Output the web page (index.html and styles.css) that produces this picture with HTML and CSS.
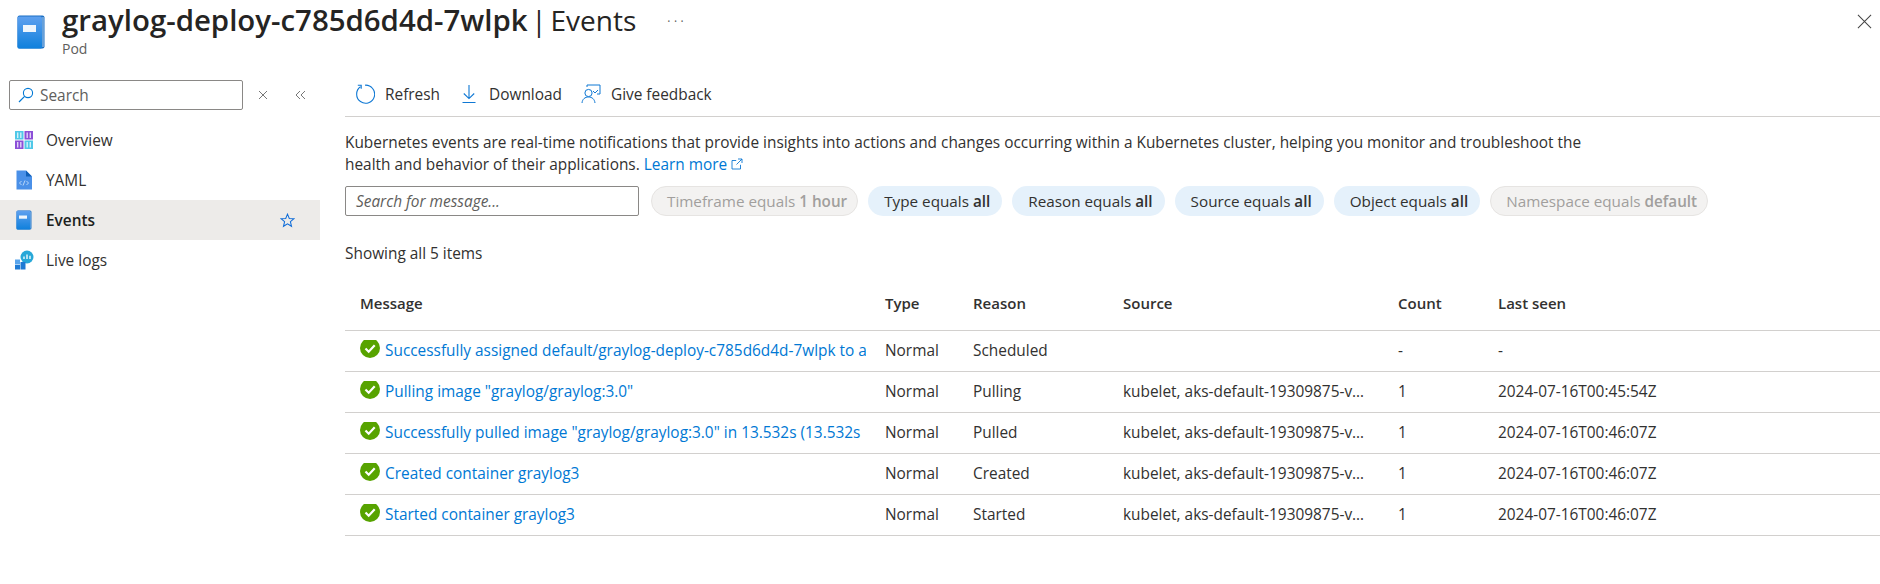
FILE: index.html
```html
<!DOCTYPE html>
<html lang="en">
<head>
    <meta charset="UTF-8">
    <title>graylog-deploy-c785d6d4d-7wlpk | Events</title>
    <link rel="stylesheet" href="styles.css">
</head>
<body>
    <svg class="hidden">
        <defs>
            <linearGradient id="bookBlue" x1="0" y1="0" x2="0" y2="1">
                <stop offset="0" stop-color="#5ea0ef"/>
                <stop offset="1" stop-color="#0f80dc"/>
            </linearGradient>
        </defs>
    </svg>

    <header class="header">
        <svg class="header-icon" viewBox="0 0 28 34">
            <rect x="0.500" y="0.500" width="27" height="33" rx="2" fill="#1a6fc4"/>
            <path d="M26 2v30" stroke="#dcebfa" stroke-width="0.800"/>
            <rect x="0.500" y="1.500" width="24.500" height="32" rx="1.500" fill="url(#bookBlue)"/>
            <rect x="6" y="10" width="13" height="7" fill="#eef5fc"/>
        </svg>
        <div class="header-text">
            <h1><b>graylog-deploy-c785d6d4d-7wlpk</b> | Events</h1>
            <div class="subtitle">Pod</div>
        </div>
        <div class="header-more">&middot;&middot;&middot;</div>
        <svg class="header-close" viewBox="0 0 16 16"><path d="M1 1l14 14M15 1L1 15" stroke="#444" stroke-width="1.100" fill="none"/></svg>
    </header>

    <div class="layout">
        <nav class="sidebar">
            <div class="side-search-row">
                <div class="side-search">
                    <svg class="icon-14" viewBox="0 0 16 16"><circle cx="10" cy="6" r="4.600" fill="none" stroke="#0078d4" stroke-width="1.100"/><path d="M6.600 9.400L1 15" stroke="#0078d4" stroke-width="1.200"/></svg>
                    <span>Search</span>
                </div>
                <svg class="side-btn" viewBox="0 0 12 12"><path d="M2 2l8 8M10 2l-8 8" stroke="#777" stroke-width="1" fill="none"/></svg>
                <svg class="side-btn" viewBox="0 0 12 12"><path d="M6 2L2 6l4 4M11 2L7 6l4 4" stroke="#777" stroke-width="1" fill="none"/></svg>
            </div>
            <div class="nav-item">
                <svg class="nav-icon" viewBox="0 0 20 20">
                    <rect x="1" y="1" width="8.500" height="8.500" fill="#50c8e8"/>
                    <rect x="10.500" y="1" width="8.500" height="8.500" fill="#8c4fd8"/>
                    <rect x="1" y="10.500" width="8.500" height="8.500" fill="#8c4fd8"/>
                    <rect x="10.500" y="10.500" width="8.500" height="8.500" fill="#50c8e8"/>
                    <path d="M3.700 2.500v5.500M6.800 2.500v5.500M13.200 2.500v5.500M16.300 2.500v5.500M3.700 12v5.500M6.800 12v5.500M13.200 12v5.500M16.300 12v5.500" stroke="#fff" stroke-opacity="0.750" stroke-width="1.400"/>
                </svg>
                <span>Overview</span>
            </div>
            <div class="nav-item">
                <svg class="nav-icon" viewBox="0 0 20 20">
                    <path d="M2.500 0.500H12L18 6.500V19.500H2.500z" fill="#4a90e8"/>
                    <path d="M12 0.500L18 6.500H12z" fill="#0f5fb8"/>
                    <path d="M7.500 11l-2 2 2 2M12.500 11l2 2-2 2M11 10.500l-2 5" stroke="#d6e8fb" stroke-width="0.800" fill="none"/>
                </svg>
                <span>YAML</span>
            </div>
            <div class="nav-item active">
                <svg class="nav-icon" viewBox="0 0 16 20">
                    <rect x="0.500" y="0.500" width="15" height="19" rx="1.500" fill="#1a6fc4"/>
                    <path d="M14.700 1.500v17" stroke="#dcebfa" stroke-width="0.500"/>
                    <rect x="0.500" y="0.800" width="13.800" height="18.700" rx="1" fill="url(#bookBlue)"/>
                    <rect x="3" y="5.500" width="8" height="3.200" fill="#eef5fc"/>
                </svg>
                <span>Events</span>
                <svg class="nav-star" viewBox="0 0 16 16"><path d="M8 1.200l1.900 4.600 5 .3-3.800 3.200 1.200 4.900L8 11.600l-4.300 2.600 1.200-4.900L1.100 6.100l5-.3z" fill="none" stroke="#0f6cd8" stroke-width="1.100"/></svg>
            </div>
            <div class="nav-item">
                <svg class="nav-icon" viewBox="0 0 20 20">
                    <circle cx="13" cy="7" r="6.500" fill="#28a8d8"/>
                    <path d="M10 9V6.500M13 9V4.500M16 9V5.800" stroke="#fff" stroke-width="1.300"/>
                    <rect x="1" y="9.500" width="5" height="5" fill="#5aa5ec"/>
                    <rect x="1" y="15" width="5" height="4.500" fill="#1f7ad4"/>
                    <rect x="6.500" y="12" width="5" height="7.500" fill="#1f7ad4"/>
                </svg>
                <span>Live logs</span>
            </div>
        </nav>

        <main class="content">
            <div class="toolbar">
                <div class="tool">
                    <svg class="tool-icon" viewBox="0 0 20 20"><path d="M5.500 2.800A9 9 0 1 0 10 1.200" fill="none" stroke="#0f78d4" stroke-width="1.100"/><path d="M2.800 1.200h3.400v3.600" fill="none" stroke="#0f78d4" stroke-width="1.100"/></svg>
                    <span>Refresh</span>
                </div>
                <div class="tool">
                    <svg class="tool-icon" viewBox="0 0 20 20"><path d="M10 1v13M4.800 9.500L10 14.600l5.200-5.100M3.500 18.500h13" fill="none" stroke="#0f78d4" stroke-width="1.100"/></svg>
                    <span>Download</span>
                </div>
                <div class="tool">
                    <svg class="tool-icon" viewBox="0 0 20 20"><path d="M6 3V1h13v9h-3" fill="none" stroke="#0f78d4" stroke-width="1"/><path d="M12 7l2 2 3-3" fill="none" stroke="#0f78d4" stroke-width="1"/><circle cx="7.500" cy="9" r="3.600" fill="none" stroke="#0f78d4" stroke-width="1"/><path d="M1 19c.4-4 3-6 6.500-6s6 2 6.500 6" fill="none" stroke="#0f78d4" stroke-width="1"/></svg>
                    <span>Give feedback</span>
                </div>
            </div>

            <p class="intro">Kubernetes events are real-time notifications that provide insights into actions and changes occurring within a Kubernetes cluster, helping you monitor and troubleshoot the<br>health and behavior of their applications. <a class="link">Learn more</a>
                <svg class="ext-icon" viewBox="0 0 12 12"><path d="M9.500 6.800V11H1V2.500h4.200M7 1h4v4M11 1L5.500 6.500" fill="none" stroke="#0f78d4" stroke-width="0.900"/></svg>
            </p>

            <div class="filters">
                <div class="msg-search">Search for message...</div>
                <div class="chip off">Timeframe equals <b>1 hour</b></div>
                <div class="chip">Type equals <b>all</b></div>
                <div class="chip">Reason equals <b>all</b></div>
                <div class="chip">Source equals <b>all</b></div>
                <div class="chip">Object equals <b>all</b></div>
                <div class="chip off">Namespace equals <b>default</b></div>
            </div>

            <div class="count-line">Showing all 5 items</div>

            <table class="events">
                <colgroup>
                    <col class="c-msg"><col class="c-type"><col class="c-reason"><col class="c-source"><col class="c-count"><col>
                </colgroup>
                <thead>
                    <tr><th>Message</th><th>Type</th><th>Reason</th><th>Source</th><th>Count</th><th>Last seen</th></tr>
                </thead>
                <tbody>
                    <tr>
                        <td class="msg-cell"><div class="msg"><svg class="ok" viewBox="0 0 20 20"><circle cx="10" cy="10" r="10" fill="#57a300"/><path d="M5.500 10.500l3.200 3.200 6-6.500" fill="none" stroke="#fff" stroke-width="2.200"/></svg><a class="link">Successfully assigned default/graylog-deploy-c785d6d4d-7wlpk to aks-default-19309875-vmss000002</a></div></td>
                        <td>Normal</td><td>Scheduled</td><td></td><td>-</td><td>-</td>
                    </tr>
                    <tr>
                        <td class="msg-cell"><div class="msg"><svg class="ok" viewBox="0 0 20 20"><circle cx="10" cy="10" r="10" fill="#57a300"/><path d="M5.500 10.500l3.200 3.200 6-6.500" fill="none" stroke="#fff" stroke-width="2.200"/></svg><a class="link">Pulling image "graylog/graylog:3.0"</a></div></td>
                        <td>Normal</td><td>Pulling</td><td><div class="cut">kubelet, aks-default-19309875-vmss000002</div></td><td>1</td><td>2024-07-16T00:45:54Z</td>
                    </tr>
                    <tr>
                        <td class="msg-cell"><div class="msg"><svg class="ok" viewBox="0 0 20 20"><circle cx="10" cy="10" r="10" fill="#57a300"/><path d="M5.500 10.500l3.200 3.200 6-6.500" fill="none" stroke="#fff" stroke-width="2.200"/></svg><a class="link">Successfully pulled image "graylog/graylog:3.0" in 13.532s (13.532s</a></div></td>
                        <td>Normal</td><td>Pulled</td><td><div class="cut">kubelet, aks-default-19309875-vmss000002</div></td><td>1</td><td>2024-07-16T00:46:07Z</td>
                    </tr>
                    <tr>
                        <td class="msg-cell"><div class="msg"><svg class="ok" viewBox="0 0 20 20"><circle cx="10" cy="10" r="10" fill="#57a300"/><path d="M5.500 10.500l3.200 3.200 6-6.500" fill="none" stroke="#fff" stroke-width="2.200"/></svg><a class="link">Created container graylog3</a></div></td>
                        <td>Normal</td><td>Created</td><td><div class="cut">kubelet, aks-default-19309875-vmss000002</div></td><td>1</td><td>2024-07-16T00:46:07Z</td>
                    </tr>
                    <tr>
                        <td class="msg-cell"><div class="msg"><svg class="ok" viewBox="0 0 20 20"><circle cx="10" cy="10" r="10" fill="#57a300"/><path d="M5.500 10.500l3.200 3.200 6-6.500" fill="none" stroke="#fff" stroke-width="2.200"/></svg><a class="link">Started container graylog3</a></div></td>
                        <td>Normal</td><td>Started</td><td><div class="cut">kubelet, aks-default-19309875-vmss000002</div></td><td>1</td><td>2024-07-16T00:46:07Z</td>
                    </tr>
                </tbody>
            </table>
        </main>
    </div>
</body>
</html>
```

FILE: styles.css
```css
* {
    box-sizing: border-box;
}
html, body {
    height: 100%;
}
body {
    margin: 0;
    font-family: "Open Sans", "Noto Sans", Arial, sans-serif;
    font-size: 15.400px;
    color: #323130;
    background: #fff;
    overflow: hidden;
}
.hidden {
    position: absolute;
    width: 0;
    height: 0;
}
b {
    font-weight: 600;
}
.link {
    color: #0078d4;
}

.header {
    display: flex;
    height: 66px;
    padding: 2px 0 0 17px;
}
.header-icon {
    width: 28px;
    height: 34px;
    margin: 13px 17px 0 0;
}
.header-text h1 {
    margin: -1px 0 1px;
    font-size: 28px;
    line-height: 38px;
    font-weight: 400;
    word-spacing: -3.500px;
    color: #252423;
    white-space: nowrap;
}
.header-text h1 b {
    font-size: 29.400px;
    font-weight: 600;
    word-spacing: 0;
}
.subtitle {
    font-size: 14px;
    line-height: 18px;
    color: #605e5c;
}
.header-more {
    margin: 8px 0 0 31px;
    font-size: 12px;
    line-height: 24px;
    letter-spacing: 3.500px;
    color: #605e5c;
}
.header-close {
    width: 15px;
    height: 15px;
    margin: 12px 8px 0 auto;
}

.layout {
    display: flex;
}
.sidebar {
    width: 320px;
    flex: none;
}
.side-search-row {
    display: flex;
    align-items: center;
    height: 54px;
    padding: 4px 0 0 9px;
}
.side-search {
    display: flex;
    align-items: center;
    gap: 6px;
    width: 234px;
    height: 30px;
    padding: 0 8px;
    border: 1px solid #8a8886;
    border-radius: 2px;
    color: #605e5c;
}
.icon-14 {
    width: 16px;
    height: 16px;
}
.side-btn {
    width: 12px;
    height: 12px;
    margin-left: 14px;
}
.side-btn + .side-btn {
    margin-left: 25px;
}
.nav-item {
    display: flex;
    align-items: center;
    height: 40px;
    padding: 0 25px 0 14px;
}
.nav-item.active {
    background: #edebe9;
    color: #201f1e;
    font-weight: 600;
}
.nav-icon {
    width: 20px;
    height: 20px;
    margin-right: 12px;
}
.nav-star {
    width: 15px;
    height: 15px;
    margin-left: auto;
}

.content {
    flex: 1;
    min-width: 0;
    padding: 0 0 0 25px;
}
.toolbar {
    display: flex;
    align-items: center;
    gap: 19px;
    height: 51px;
    border-bottom: 1px solid #d2d0ce;
    padding: 6px 0 0 10px;
}
.tool {
    display: flex;
    align-items: center;
    gap: 10px;
}
.tool-icon {
    width: 20px;
    height: 20px;
}
.intro {
    margin: 15px 0 0;
    line-height: 22px;
}
.ext-icon {
    width: 12px;
    height: 12px;
}
.filters {
    display: flex;
    align-items: center;
    gap: 10px;
    margin-top: 10px;
}
.msg-search {
    width: 294px;
    height: 30px;
    margin-right: 2px;
    padding: 0 10px;
    line-height: 29px;
    border: 1px solid #8a8886;
    border-radius: 2px;
    font-style: italic;
    color: #605e5c;
}
.chip {
    height: 30px;
    padding: 0 12px 0 16px;
    font-size: 15.250px;
    line-height: 31px;
    border-radius: 15px;
    background: #e5f1fb;
    white-space: nowrap;
}
.chip.off {
    padding: 0 10px 0 15px;
    background: #f3f2f1;
    border: 1px solid #e6e4e2;
    line-height: 29px;
    color: #a19f9d;
}
.count-line {
    margin-top: 28px;
    line-height: 20px;
}

.events {
    width: 100%;
    margin-top: 15px;
    border-collapse: collapse;
    table-layout: fixed;
}
.c-msg {
    width: 525px;
}
.c-type {
    width: 88px;
}
.c-reason {
    width: 150px;
}
.c-source {
    width: 275px;
}
.c-count {
    width: 100px;
}
.events th {
    height: 51px;
    padding: 0 15px 2px;
    text-align: left;
    font-size: 15px;
    font-weight: 600;
    border-bottom: 1px solid #d2d0ce;
}
.events td {
    height: 41px;
    padding: 0 15px;
    border-bottom: 1px solid #d2d0ce;
    white-space: nowrap;
    overflow: hidden;
}
.events td.msg-cell {
    padding-right: 4px;
}
.msg {
    display: flex;
    align-items: center;
    gap: 5px;
    overflow: hidden;
}
.ok {
    width: 20px;
    height: 20px;
    flex: none;
    margin-top: -6px;
}
.cut {
    overflow: hidden;
    text-overflow: ellipsis;
}
```
